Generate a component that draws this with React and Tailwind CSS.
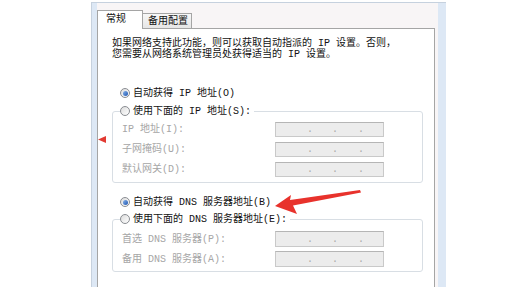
import React from "react";

function Radio({ checked }) {
  return (
    <span className="flex h-[10px] w-[10px] shrink-0 items-center justify-center rounded-full border border-[#8a8d92] bg-gradient-to-br from-[#dcdcdc] to-white">
      {checked && (
        <span className="h-[5px] w-[5px] rounded-full bg-gradient-to-br from-[#86b2ea] to-[#1f56b0]" />
      )}
    </span>
  );
}

function IpBox({ h = "h-[15px]" }) {
  return (
    <div className={`flex ${h} w-[109px] items-end border border-[#c9c9c9] border-t-[#b5b5b5] bg-[#ececec] pb-[1px] pl-[31px] text-[#a9a9a9] leading-[10px]`}>
      <span className="w-[25px]">.</span>
      <span className="w-[26px]">.</span>
      <span>.</span>
    </div>
  );
}

function FieldRow({ label, h }) {
  return (
    <div className="flex h-[20px] items-center">
      <span className="ml-[2px] w-[153px] text-[#a6a6a6]">{label}</span>
      <IpBox h={h} />
    </div>
  );
}

function Legend({ checked, children }) {
  return (
    <legend className="flex h-[16px] items-center gap-[3px] pr-[3px] text-[#111]">
      <Radio checked={checked} />
      <span>{children}</span>
    </legend>
  );
}

export default function App() {
  return (
    <div className="relative h-[293px] w-[531px] overflow-hidden bg-white font-['Liberation_Mono','Noto_Sans_CJK_SC',monospace] text-[10px] leading-[11px]">
      <div className="ml-[91px] mt-[2px] flex h-[285px] w-[355px] border-l border-t border-[#c6d1de] bg-[#dde8f5] pl-[5px] pr-[8px]">
        <div className="flex flex-1 flex-col bg-[#f8f5f6]">
          {/* tabs */}
          <div className="flex h-[25px] items-end">
            <div className="relative z-10 -mb-px flex h-[19px] w-[46px] items-start border border-b-0 border-[#a5a5a5] bg-white pl-[8px] pt-[3px] text-[#111]">
              常规
            </div>
            <div className="flex h-[15px] w-[49px] items-start border border-l-0 border-b-0 border-[#a5a5a5] bg-gradient-to-b from-[#f7f7f7] to-[#e6e6e6] pl-[5px] pt-[2px] text-[#111]">
              备用配置
            </div>
          </div>
          {/* panel */}
          <div className="mr-[3px] flex-1 border border-b-0 border-[#a5a5a5] bg-white">
            <div className="ml-[14px] mt-[9px] text-[#111]">
              <div>如果网络支持此功能，则可以获取自动指派的 IP 设置。否则，</div>
              <div>您需要从网络系统管理员处获得适当的 IP 设置。</div>
            </div>

            <div className="ml-[22px] mt-[25px] flex h-[16px] items-center gap-[3px] text-[#111]">
              <Radio checked />
              <span>自动获得 IP 地址(O)</span>
            </div>

            <fieldset className="ml-[14px] mt-[2px] w-[311px] rounded-[3px] border border-[#d8dee4] px-[7px] pb-[3px]">
              <Legend>使用下面的 IP 地址(S):</Legend>
              <FieldRow label="IP 地址(I):" />
              <FieldRow label="子网掩码(U):" />
              <FieldRow label="默认网关(D):" />
            </fieldset>

            <div className="ml-[22px] mt-[11px] flex h-[16px] items-center gap-[3px] text-[#111]">
              <Radio checked />
              <span>自动获得 DNS 服务器地址(B)</span>
            </div>

            <fieldset className="ml-[14px] mt-[1px] w-[311px] rounded-[3px] border border-[#d8dee4] px-[7px] pb-[2px] pt-[2px]">
              <Legend>使用下面的 DNS 服务器地址(E):</Legend>
              <FieldRow label="首选 DNS 服务器(P):" h="h-[16px]" />
              <FieldRow label="备用 DNS 服务器(A):" h="h-[16px]" />
            </fieldset>
          </div>
        </div>
      </div>

      {/* annotation arrows */}
      <svg className="pointer-events-none absolute left-0 top-0" width="531" height="293">
        <polygon points="98,139.5 106,136 106,143" fill="#e23a32" />
        <polygon
          points="275,206 291,195 290,200 360,190 361,192.5 293,205.5 297,214"
          fill="#e8322c"
        />
      </svg>
    </div>
  );
}
